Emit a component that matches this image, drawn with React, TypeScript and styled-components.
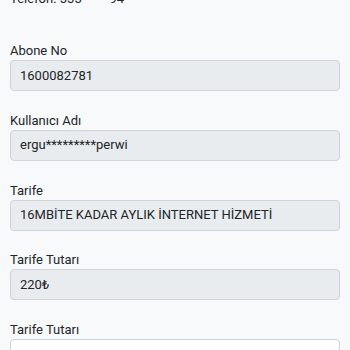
import React from 'react';
import styled, { createGlobalStyle } from 'styled-components';

const GlobalStyle = createGlobalStyle`
    html, body {
        margin: 0;
        padding: 0;
        background: #f8f9fa;
        font-family: Roboto, "Liberation Sans", sans-serif;
        color: #212529;
    }
    * { box-sizing: border-box; }
`;

const Page = styled.div`
    padding: 0 10px;
    display: flex;
    flex-direction: column;
`;

const Phone = styled.div`
    margin-top: -9px;
    font-size: 13px;
    line-height: 15px;
    color: #212529;
    margin-bottom: 37px;
`;

const Group = styled.div`
    display: flex;
    flex-direction: column;
    gap: 2px;
    margin-bottom: 21.75px;
`;

const Label = styled.label`
    font-size: 13px;
    line-height: 15px;
    margin: 0;
`;

const Field = styled.input<{ $editable?: boolean }>`
    width: 100%;
    height: 31px;
    padding: 0 9px 1px;
    font-family: inherit;
    font-size: 13px;
    line-height: 28px;
    color: #212529;
    border: 1px solid #ced4da;
    border-radius: 4px;
    background: ${p => (p.$editable ? '#ffffff' : '#e9ecef')};
    opacity: 1;
    -webkit-text-fill-color: #212529;
    outline: none;
`;

const fields = [
    { label: 'Abone No', value: '1600082781' },
    { label: 'Kullanıcı Adı', value: 'ergu*********perwi' },
    { label: 'Tarife', value: '16MBİTE KADAR AYLIK İNTERNET HİZMETİ' },
    { label: 'Tarife Tutarı', value: '220₺' },
    { label: 'Tarife Tutarı', value: '21', editable: true },
];

export default function App() {
    return (
        <>
            <GlobalStyle />
            <Page>
                <Phone>Telefon: 555*****94</Phone>
                {fields.map((f, i) => (
                    <Group key={i}>
                        <Label htmlFor={'f' + i}>{f.label}</Label>
                        <Field
                            id={'f' + i}
                            defaultValue={f.value}
                            disabled={!f.editable}
                            $editable={f.editable}
                        />
                    </Group>
                ))}
            </Page>
        </>
    );
}
